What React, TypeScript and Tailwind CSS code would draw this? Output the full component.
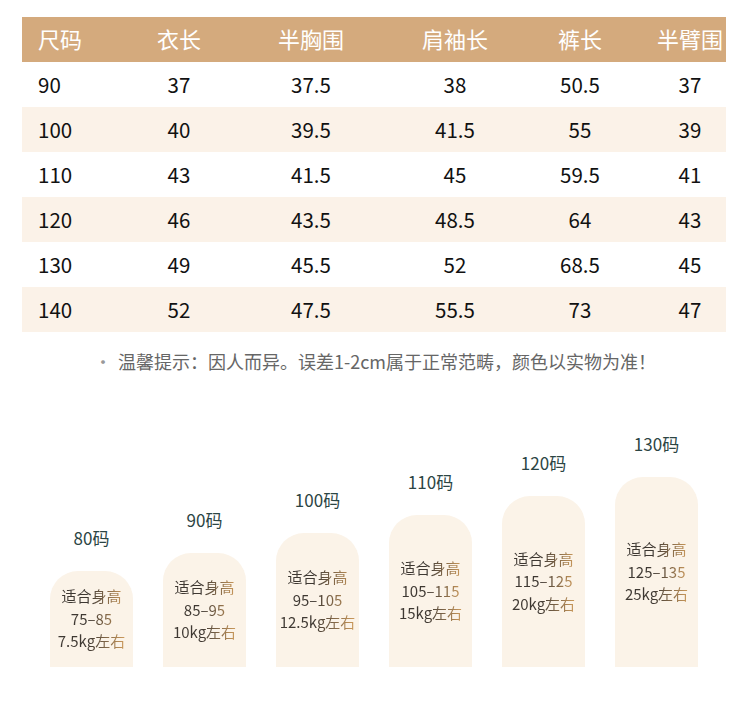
import React from 'react';

const headers = ['尺码', '衣长', '半胸围', '肩袖长', '裤长', '半臂围'];

const rows = [
  ['90', '37', '37.5', '38', '50.5', '37'],
  ['100', '40', '39.5', '41.5', '55', '39'],
  ['110', '43', '41.5', '45', '59.5', '41'],
  ['120', '46', '43.5', '48.5', '64', '43'],
  ['130', '49', '45.5', '52', '68.5', '45'],
  ['140', '52', '47.5', '55.5', '73', '47'],
];

const cells = [
  'w-[91px] pl-[16px] text-left',
  'w-[132px] text-center',
  'w-[132px] text-center',
  'w-[156px] text-center',
  'w-[94px] text-center',
  'w-[99px] pl-[27px] text-center',
];

const sizes = [
  { label: '80码', h: 'h-[96px]', height: '75–85', weight: '7.5kg左右' },
  { label: '90码', h: 'h-[114px]', height: '85–95', weight: '10kg左右' },
  { label: '100码', h: 'h-[134px]', height: '95–105', weight: '12.5kg左右' },
  { label: '110码', h: 'h-[152px]', height: '105–115', weight: '15kg左右' },
  { label: '120码', h: 'h-[171px]', height: '115–125', weight: '20kg左右' },
  { label: '130码', h: 'h-[190px]', height: '125–135', weight: '25kg左右' },
];

export default function App() {
  return (
    <div className="w-[750px] h-[712px] bg-white pt-[17px] font-['Noto_Sans_CJK_SC',sans-serif]">
      {/* size table */}
      <div className="mx-[22px] w-[704px]">
        <div className="flex items-center h-[45px] bg-[#d4aa7d] text-white text-[22px] pb-[2px]">
          {headers.map((h, i) => (
            <div key={h} className={cells[i]}>{h}</div>
          ))}
        </div>
        {rows.map((r, ri) => (
          <div
            key={r[0]}
            className={`flex items-center h-[45px] text-[20.5px] text-[#111] ${ri % 2 === 1 ? 'bg-[#fbf2e8]' : 'bg-white'}`}
          >
            {r.map((c, i) => (
              <div key={i} className={cells[i]}>{c}</div>
            ))}
          </div>
        ))}
      </div>

      <p className="mt-[18px] leading-[22px] text-center text-[18px] text-[#666]">
        <span className="mr-[6px] text-[#999]">•</span>温馨提示：因人而异。误差1-2cm属于正常范畴，颜色以实物为准！
      </p>

      {/* height guide */}
      <div className="flex items-end h-[295px] pl-[50px] gap-[30px]">
        {sizes.map((s) => (
          <div key={s.label} className="flex flex-col items-center w-[83px]">
            <div className="text-[17px] leading-[20px] text-[#2c4544] mb-[23px]">{s.label}</div>
            <div className={`w-[83px] ${s.h} rounded-t-[28px] bg-[#fbf3e8] flex items-center justify-center`}>
              <div className="text-center text-[15px] leading-[22.5px] whitespace-nowrap bg-linear-to-r from-[#3e3832] from-45% to-[#cf9c5c] bg-clip-text text-transparent">
                <div>适合身高</div>
                <div>{s.height}</div>
                <div>{s.weight}</div>
              </div>
            </div>
          </div>
        ))}
      </div>
    </div>
  );
}
